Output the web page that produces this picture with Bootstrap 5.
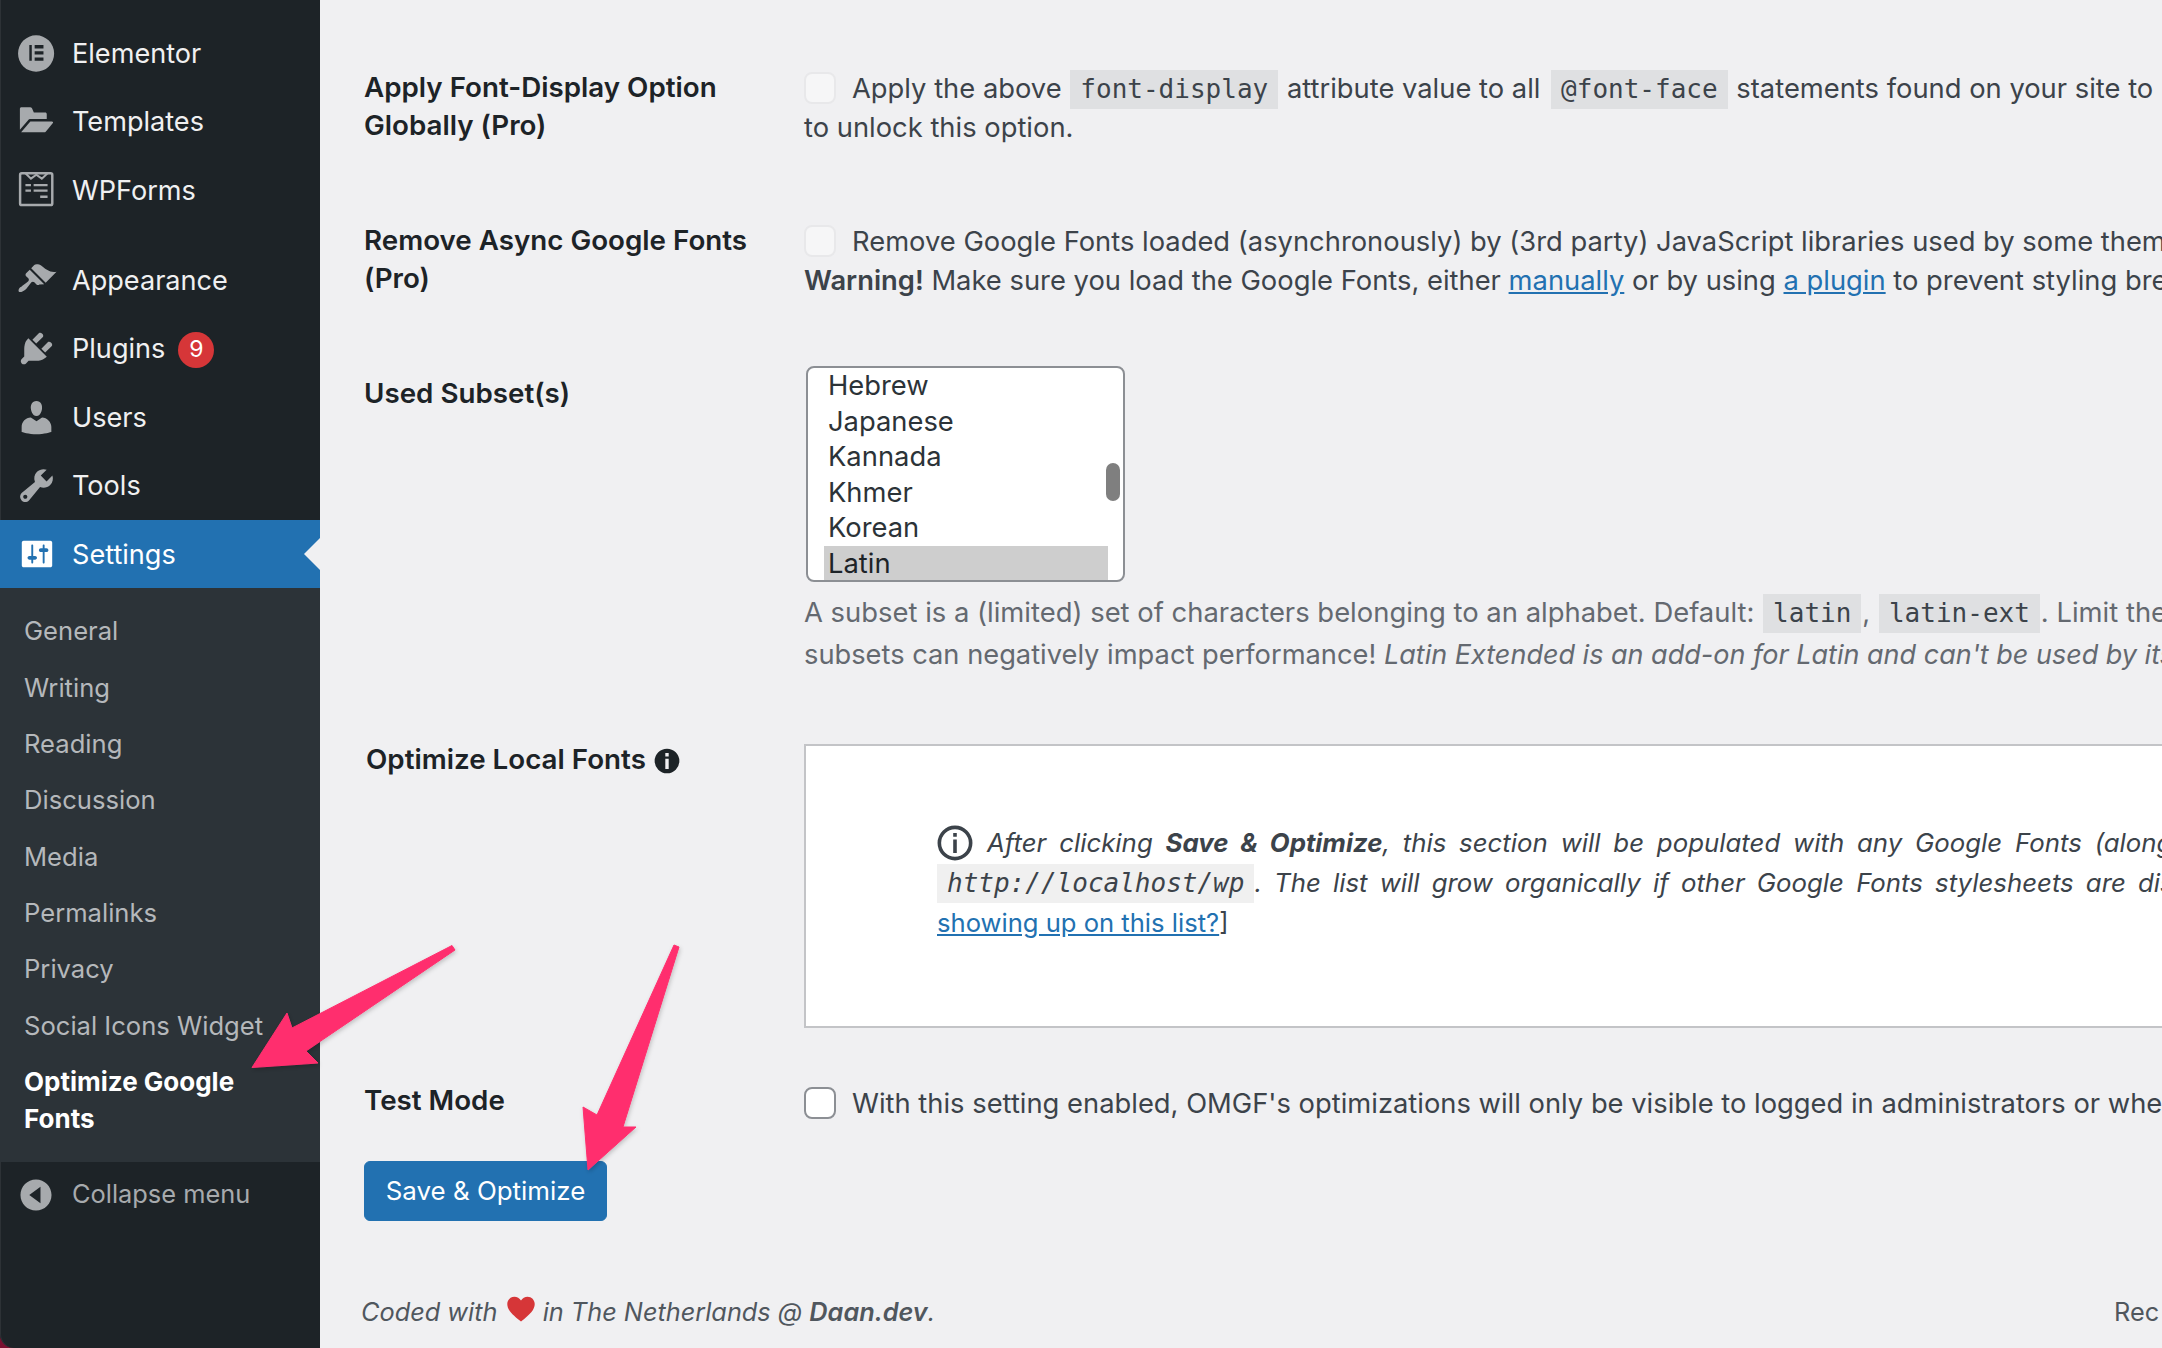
<!DOCTYPE html>
<html lang="en"><head><meta charset="utf-8"><title>OMGF settings</title>
<link href="https://cdn.jsdelivr.net/npm/bootstrap@5.3.0/dist/css/bootstrap.min.css" rel="stylesheet">
<style>
html,body{height:100%;overflow:hidden}
body{background:#f0f0f2;font-family:Inter,"Liberation Sans",sans-serif;font-size:27.35px;line-height:38.6px;color:#3c434a}
.shell{width:2162px;height:1348px;overflow:hidden;position:relative;background:#7a1030}
.side{width:320px;flex:none;background:#1d2327;padding-top:19px;border-bottom-left-radius:14px;box-shadow:inset 1px 0 0 #2d3236}
.mi{height:68.4px;display:flex;align-items:center;color:#f0f0f1;text-decoration:none;padding-left:15.5px;font-size:27.1px}
.tx{padding-top:2px}
.mi svg{width:41px;height:41px;fill:#a7aaad;flex:none;margin-right:15.5px}
.mi.cur{background:#2271b1;color:#fff;position:relative;padding-left:18px}
.mi.cur svg{fill:#fff;width:38px;height:38px;margin-right:16px}
.mi.cur::after{content:"";position:absolute;right:0;top:18px;border:16px solid transparent;border-right-color:#f0f0f2;border-left:0}
.sep{height:22px}
.count{width:36px;height:36px;border-radius:50%;background:#d63638;color:#fff;font-size:23px;display:flex;align-items:center;justify-content:center;margin:2px 0 0 13px;line-height:1}
.sub{background:#2c3338;padding:15px 0 25px;}
.sub a{display:block;padding:0 10px 0 24px;color:#b5b8bb;text-decoration:none;font-size:25.6px;height:56.4px;line-height:56.4px}
.sub a.on{color:#fff;font-weight:700;font-size:26px;height:auto;line-height:37px;padding-top:9px}
.collapse-row{display:flex;align-items:center;color:#a7aaad;font-size:25.4px;padding:13px 0 0 20px}
.collapse-row svg{width:32px;height:32px;fill:#a7aaad;margin-right:20px}
.page{flex:1 1 auto;min-width:0;overflow:hidden;position:relative;padding-left:44px;background:#f0f0f2}
.rw{display:flex;white-space:nowrap}
.lab{width:440px;flex:none;font-weight:600;font-size:27.75px;line-height:37.5px;color:#1d2327;white-space:normal;padding:0 50px 0 0;margin-top:-1px}
.val{flex:none}
.r1{margin-top:70px}.r2{margin-top:76px}.r3{margin-top:74px}.r4{margin-top:66px}.r5{margin-top:54px}
.r3 .lab{padding-top:2px}
.r4 .lab{padding-left:2px;padding-top:1px}
.r5 .lab{padding-top:1px}
.r5 .val{padding-top:3px}
code.cd{font-family:"DejaVu Sans Mono",monospace;font-size:26px;background:#dfe0e2;color:#3c434a;padding:4px 10px 5px;margin:0 1px}
code.cd.far{margin-left:3px}
.fake{display:inline-block;width:32px;height:32px;border-radius:8px;border:2px solid #e8e8ea;background:#f6f6f7;vertical-align:-6px;margin-right:16px}
.fake.live{background:#fff;border-color:#8c8f94}
.lnk{color:#2271b1;text-decoration:underline}
.dim{color:#646970}
.pick{width:319px;height:216px;margin:-8px 0 0 2px;background:#fff;border:2px solid #8c8f94;border-radius:8px;position:relative;overflow:hidden;color:#2c3338;padding:0 0 0 16px}
.opt{height:35.4px;line-height:35.4px;padding-left:4px;width:284px}
.opt.sel{background:#cecece;color:#1d2327;margin-top:1px}
.thumb{position:absolute;right:3px;top:95px;width:14px;height:38px;border-radius:7px;background:#7f7f7f}
.desc{margin-top:10px;line-height:41px;font-size:27.42px}
.desc .nx{font-size:27.28px}
.desc em{font-size:27px}
.notebox{width:1600px;height:284px;background:#fff;border:2px solid #c3c4c7;margin-top:3px;padding:77px 0 0 131px;font-style:italic;font-size:25.8px;line-height:39.5px}
.notebox .ws{word-spacing:5.6px}
.notebox .ws2{word-spacing:4.9px}
.notebox .lk{font-size:25.6px}
.notebox code{font-style:italic;background:#f0f0f0;font-size:26px;font-family:"DejaVu Sans Mono",monospace;padding:4px 10px 5px;color:#3c434a}
.notebox svg{width:36px;height:36px;vertical-align:-9px;margin-right:14px}
.inf{width:26px;height:26px;vertical-align:-5px;margin-left:1px}
.save{background:#2271b1;border-color:#2271b1;color:#fff;font-size:25.9px;line-height:1;width:243px;height:60px;padding:0;border-radius:6px;margin-top:37.4px;display:block}
.foot{display:flex;justify-content:space-between;margin:71.5px 0 0 -3px;font-style:italic;color:#50575e;width:1801px;white-space:nowrap;font-size:25.3px}
.foot .rt{font-style:normal;width:48px;overflow:hidden}
.foot svg{width:28px;height:26px;fill:#d63638;vertical-align:-1px;margin:0 1px 0 2px}
.arrows{position:absolute;left:0;top:0;width:2162px;height:1348px;pointer-events:none}
</style></head><body>
<div class="shell d-flex">
<nav class="side">
<a class="mi" href="#"><svg viewBox="0 0 20 20"><path fill-rule="evenodd" d="M9.800 1.100a8.800 8.900 0 1 1 0 17.800 8.800 8.900 0 0 1 0-17.800zM6.500 5.900v7.600h1.200V5.900zM9.100 5.900v1.600h4.300V5.900zM9.100 8.900v1.600h4.300V8.900zM9.100 11.900v1.600h4.300v-1.600z"/></svg><span class="tx">Elementor</span></a>
<a class="mi" href="#"><svg viewBox="0 0 20 20"><path d="M1.900 3.800c0-.5.3-.8.8-.8h4.200c.4 0 .7.2.9.5l.9 2.100H14.200c.5 0 .8.3.8.8v2.400H7c-.5 0-.9.3-1.200.7L1.900 14z"/><path d="M7 10H17.500c.5 0 .7.4.5.7l-3.500 4.300c-.2.2-.4.3-.7.3H2.500z"/></svg><span class="tx">Templates</span></a>
<a class="mi" href="#"><svg viewBox="0 0 20 20"><rect x="2" y="2.100" width="15.700" height="15.500" rx=".8" fill="none" stroke="#a7aaad" stroke-width="1.200"/><polyline points="4.600,2.100 7.300,4.700 9.900,2.800 12.600,4.700 15.400,2.100" fill="none" stroke="#a7aaad" stroke-width="1"/><path d="M4.600 7.300h2.700v1.100H4.600zM8.600 7.300h6.800v1.100H8.600zM4.600 10h2.700v1.100H4.600zM8.600 10h6.800v1.100H8.600zM11.800 12.900h3.600v1.300h-3.600z"/></svg><span class="tx">WPForms</span></a>
<div class="sep"></div>
<a class="mi" href="#"><svg viewBox="0 0 20 20"><path d="M14.48 11.06L7.41 3.99l1.5-1.5c.5-.56 2.3-.47 3.51.32 1.21.8 1.43 1.28 2.91 2.1 1.18.64 2.45 1.26 4.45.85zm-.71.71L6.7 4.7 4.93 6.47c-.39.39-.39 1.02 0 1.41l1.06 1.06c.39.39.39 1.03 0 1.42-.6.6-1.43 1.11-2.21 1.69-.35.26-.7.53-1.01.84C1.43 13.23 1 14.99 1.44 15.43s2.2 0 3.54-1.33c.31-.31.58-.66.84-1.01.58-.78 1.09-1.61 1.69-2.21.39-.39 1.03-.39 1.42 0l1.06 1.06c.39.39 1.02.39 1.41 0z"/></svg><span class="tx">Appearance</span></a>
<a class="mi" href="#"><svg viewBox="0 0 20 20"><path d="M13.11 4.36L9.87 7.6 8 5.73l3.24-3.24c.35-.34 1.05-.2 1.56.32.52.51.66 1.21.31 1.55zm-8 1.77l.91-1.12 9.01 9.01-1.19.84c-.71.71-2.63 1.16-3.82 1.16H6.14L4.9 17.26c-.59.59-1.54.59-2.12 0-.59-.58-.59-1.53 0-2.12l1.24-1.24v-3.88c0-1.13.4-3.19 1.09-3.89zm7.26 3.97l3.24-3.24c.34-.35 1.04-.21 1.55.31.52.51.66 1.21.31 1.55l-3.24 3.25z"/></svg><span class="tx">Plugins</span><span class="count">9</span></a>
<a class="mi" href="#"><svg viewBox="0 0 20 20"><path d="M10 9.25c-2.27 0-2.73-3.44-2.73-3.44C7 4.02 7.82 2 9.97 2c2.16 0 2.98 2.02 2.71 3.81 0 0-.41 3.44-2.68 3.44zm0 2.57L12.72 10c2.39 0 4.52 2.33 4.52 4.53v2.49s-3.65 1.13-7.24 1.13c-3.65 0-7.24-1.13-7.24-1.13v-2.49c0-2.25 1.94-4.48 4.47-4.48z"/></svg><span class="tx">Users</span></a>
<a class="mi" href="#"><svg viewBox="0 0 20 20"><path fill-rule="evenodd" d="M16.68 9.77c-1.34 1.34-3.3 1.67-4.95.99l-5.41 6.52c-.99.99-2.59.99-3.58 0s-.99-2.59 0-3.57l6.52-5.42c-.68-1.65-.35-3.61.99-4.95 1.28-1.28 3.12-1.62 4.72-1.06l-2.89 2.89 2.82 2.82 2.86-2.87c.53 1.58.18 3.39-1.08 4.65zM3.81 16.21c.4.39 1.04.39 1.43 0 .4-.4.4-1.04 0-1.43-.39-.4-1.03-.4-1.43 0-.39.39-.39 1.03 0 1.43z"/></svg><span class="tx">Tools</span></a>
<a class="mi cur" href="#"><svg viewBox="0 0 20 20"><path fill-rule="evenodd" d="M18 16V4c0-.55-.45-1-1-1H3c-.55 0-1 .45-1 1v12c0 .55.45 1 1 1h14c.55 0 1-.45 1-1zM8 11h1c.55 0 1 .45 1 1s-.45 1-1 1H8v1.5c0 .28-.22.5-.5.5s-.5-.22-.5-.5V13H6c-.55 0-1-.45-1-1s.45-1 1-1h1V5.5c0-.28.22-.5.5-.5s.5.22.5.5V11zm5-2h-1c-.55 0-1-.45-1-1s.45-1 1-1h1V5.5c0-.28.22-.5.5-.5s.5.22.5.5V7h1c.55 0 1 .45 1 1s-.45 1-1 1h-1v5.5c0 .28-.22.5-.5.5s-.5-.22-.5-.5V9z"/></svg><span class="tx">Settings</span></a>
<div class="sub">
<a href="#">General</a><a href="#">Writing</a><a href="#">Reading</a><a href="#">Discussion</a><a href="#">Media</a><a href="#">Permalinks</a><a href="#">Privacy</a><a href="#">Social Icons Widget</a><a class="on" href="#">Optimize Google<br>Fonts</a>
</div>
<div class="collapse-row"><svg viewBox="0 0 20 20"><path fill-rule="evenodd" d="M10 .3c5.4 0 9.7 4.3 9.7 9.7s-4.3 9.7-9.7 9.7S.3 15.4.3 10 4.6.3 10 .3zM12.800 4.800 5.800 10l7 5.200z"/></svg>Collapse menu</div>
</nav>
<main class="page">
<div class="rw r1"><div class="lab">Apply Font-Display Option Globally (Pro)</div><div class="val"><span class="fake"></span>Apply the above <code class="cd">font-display</code> attribute value to all <code class="cd far">@font-face</code> statements found on your site to<br>to unlock this option.</div></div>
<div class="rw r2"><div class="lab">Remove Async Google Fonts (Pro)</div><div class="val"><span class="fake"></span>Remove Google Fonts loaded (asynchronously) by (3rd party) JavaScript libraries used by some theme<br><strong class="fw-semibold">Warning!</strong> Make sure you load the Google Fonts, either <a class="lnk" href="#">manually</a> or by using <a class="lnk" href="#">a plugin</a> to prevent styling bre</div></div>
<div class="rw r3"><div class="lab">Used Subset(s)</div><div class="val">
<div class="pick"><div class="opt">Hebrew</div><div class="opt">Japanese</div><div class="opt">Kannada</div><div class="opt">Khmer</div><div class="opt">Korean</div><div class="opt sel">Latin</div><div class="thumb"></div></div>
<div class="desc dim">A subset is a (limited) set of characters belonging to an alphabet. Default: <code class="cd">latin</code>, <code class="cd">latin-ext</code>. Limit the<br><span class="nx">subsets can negatively impact performance! <em>Latin Extended is an add-on for Latin and can't be used by its</em></span></div>
</div></div>
<div class="rw r4"><div class="lab">Optimize Local Fonts <svg class="inf" viewBox="0 0 20 20"><path fill="#1d2327" fill-rule="evenodd" d="M10 .5a9.5 9.5 0 1 1 0 19 9.5 9.5 0 0 1 0-19zM8.700 3.800v2.700h2.600V3.800zM8.700 8.200v8h2.600v-8z"/></svg></div><div class="val">
<div class="notebox"><svg viewBox="0 0 20 20"><circle cx="10" cy="10" r="8.700" fill="none" stroke="#3c434a" stroke-width="2"/><path fill="#3c434a" d="M9 4.500h2v2H9zM9 8h2v7.500H9z"/></svg><span class="ws">After clicking <strong>Save &amp; Optimize</strong>, this section will be populated with any Google Fonts (along</span><br><code>http://localhost/wp</code><span class="ws2">. The list will grow organically if other Google Fonts stylesheets are dis</span><br><span class="fst-normal lk"><a class="lnk" href="#">showing up on this list?</a>]</span></div>
</div></div>
<div class="rw r5"><div class="lab">Test Mode</div><div class="val"><span class="fake live"></span>With this setting enabled, OMGF's optimizations will only be visible to logged in administrators or whe</div></div>
<button type="button" class="btn save">Save &amp; Optimize</button>
<div class="foot"><span>Coded with <svg viewBox="0 0 20 18"><path d="M10 18C3.500 13 .2 9.500.2 5.500.2 2.400 2.500.2 5.300.2 7.200.2 9 1.200 10 3 11 1.200 12.800.2 14.700.2c2.800 0 5.100 2.200 5.100 5.300C19.800 9.500 16.500 13 10 18z"/></svg> in The Netherlands @ <strong class="fw-semibold">Daan.dev</strong>.</span><span class="rt">Rec</span></div>
</main>
<svg class="arrows" viewBox="0 0 2162 1348"><defs><filter id="sh" x="-20%" y="-20%" width="140%" height="140%"><feDropShadow dx="1" dy="2" stdDeviation="2" flood-color="#000" flood-opacity=".2"/></filter></defs>
<g fill="#ff2f6e" filter="url(#sh)" stroke="#ff2f6e" stroke-width="1" stroke-linejoin="round">
<path d="M452 945.500 455 950 306 1051 318 1063 252 1067.500 287 1013 292 1028z"/>
<path d="M674 945 679 947 623 1127 636 1127 588 1170 583 1107 597 1115z"/></g></svg>
</div>
<script src="https://cdn.jsdelivr.net/npm/bootstrap@5.3.0/dist/js/bootstrap.bundle.min.js"></script>
</body></html>
